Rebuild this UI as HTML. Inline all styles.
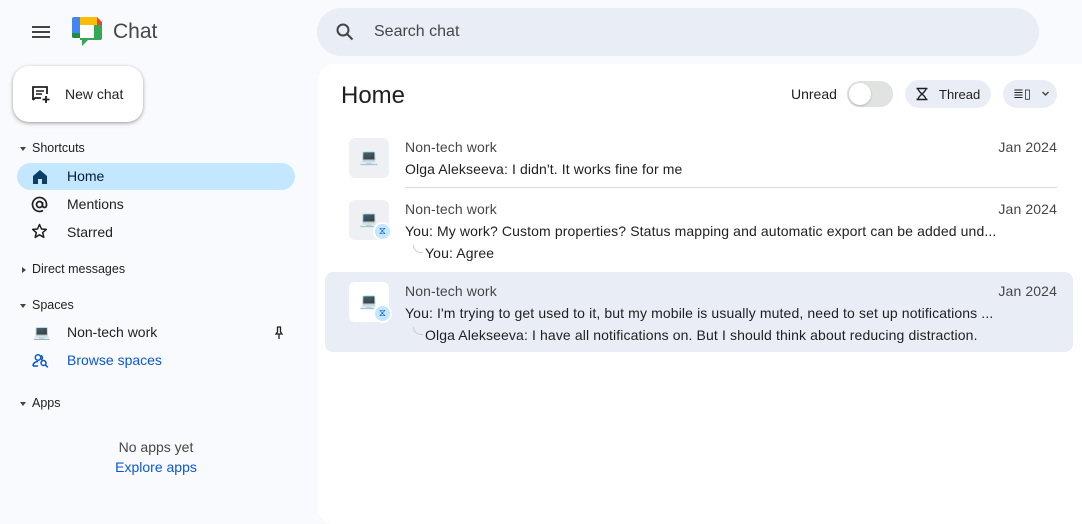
<!DOCTYPE html>
<html><head><meta charset="utf-8"><style>
*{box-sizing:border-box;margin:0;padding:0}
body{width:1082px;height:510px;overflow:hidden;background:#f8fafd;font-family:"Liberation Sans",Arial,sans-serif;color:#1f1f1f;position:relative}
.abs{position:absolute}
.side-item{position:absolute;left:17px;width:278px;height:27px;border-radius:14px;font-size:14px;line-height:27px}
.side-item span{position:absolute;left:50px}
.sec{position:absolute;left:20px;font-size:12.5px;color:#1f1f1f}
.sec:before{content:"";display:inline-block;margin-right:6px;vertical-align:middle;border-left:3.5px solid transparent;border-right:3.5px solid transparent;border-top:4px solid #444}
.sec.r:before{border-top:3.5px solid transparent;border-bottom:3.5px solid transparent;border-left:4px solid #444;border-right:0;margin-left:2px}
.row{position:absolute;left:325px;width:748px;font-size:14px;color:#444746;letter-spacing:0.12px}
.av{position:absolute;left:24px;width:40px;height:40px;border-radius:6px;background:#eef0f3;font-size:15px;text-align:center;line-height:40px}
.badge{position:absolute;left:48px;width:19px;height:19px;border-radius:50%;background:#c2e7ff;border:2px solid #fff;font-size:10px;text-align:center;line-height:15px;color:#0b57d0}
.nm{position:absolute;left:80px}
.dt{position:absolute;right:16px}
</style></head><body>
<div class="abs" style="left:32px;top:26px;width:18px;height:2px;background:#444;box-shadow:0 5px 0 #444,0 10px 0 #444"></div>
<svg class="abs" style="left:71px;top:16px" width="32" height="32" viewBox="0 0 32 32">
<path d="M3 1h6v21H3a2 2 0 0 1-2-2V3a2 2 0 0 1 2-2z" fill="#4285f4"/>
<path d="M1 17h8v5H3a2 2 0 0 1-2-2z" fill="#1e8e3e"/>
<path d="M9 1h17v8H9z" fill="#fbbc04"/>
<path d="M26 1l5 5v3h-5z" fill="#ea4335"/>
<path d="M23 9h8v13a2 2 0 0 1-2 2H17l-6 6v-6H9v-2h14z" fill="#34a853"/>
<path d="M9 9h14v13H9z" fill="#fff"/>
</svg>
<div class="abs" style="left:113px;top:20px;font-size:21px;color:#444746">Chat</div>
<div class="abs" style="left:317px;top:8px;width:722px;height:48px;border-radius:24px;background:#e9eef6"></div>
<svg class="abs" style="left:335px;top:22px" width="20" height="20" viewBox="0 0 20 20"><circle cx="8" cy="8" r="5.5" fill="none" stroke="#444" stroke-width="2"/><path d="M12 12l5.5 5.5" stroke="#444" stroke-width="2"/></svg>
<div class="abs" style="left:374px;top:23px;font-size:16px;color:#444746">Search chat</div>
<div class="abs" style="left:13px;top:66px;width:130px;height:56px;border-radius:16px;background:#fff;box-shadow:0 1px 3px rgba(0,0,0,.3),0 2px 6px rgba(0,0,0,.1)"></div>
<svg class="abs" style="left:31px;top:84px" width="20" height="20" viewBox="0 0 20 20"><path d="M2 16V3h14v7" fill="none" stroke="#1f1f1f" stroke-width="1.8"/><path d="M2 16l2-2h6" fill="none" stroke="#1f1f1f" stroke-width="1.8"/><path d="M5 7h8M5 10h6" stroke="#1f1f1f" stroke-width="1.6"/><path d="M15 12v7M11.5 15.5h7" stroke="#1f1f1f" stroke-width="1.8"/></svg>
<div class="abs" style="left:65px;top:86px;font-size:14px;font-weight:500">New chat</div>
<div class="sec" style="top:141px">Shortcuts</div>
<div class="side-item" style="top:163px;background:#c2e7ff;color:#001d35"><svg class="abs" style="left:15px;top:6px" width="16" height="16" viewBox="0 0 16 16"><path d="M1 7L8 1l7 6v8h-5v-5H6v5H1z" fill="#0b3f66"/></svg><span>Home</span></div>
<div class="side-item" style="top:191px"><svg class="abs" style="left:14px;top:5px" width="17" height="17" viewBox="0 0 17 17"><circle cx="8.5" cy="8.5" r="3" fill="none" stroke="#1f1f1f" stroke-width="1.7"/><path d="M11.5 6v3.5a2 2 0 0 0 4 0V8.5A7 7 0 1 0 12 14.5" fill="none" stroke="#1f1f1f" stroke-width="1.7"/></svg><span>Mentions</span></div>
<div class="side-item" style="top:219px"><svg class="abs" style="left:14px;top:4px" width="17" height="17" viewBox="0 0 17 17"><path d="M8.5 1.5l2 4.5 4.8.4-3.6 3.2 1.1 4.8-4.3-2.6-4.3 2.6 1.1-4.8L1.7 6.4l4.8-.4z" fill="none" stroke="#1f1f1f" stroke-width="1.5" stroke-linejoin="round"/></svg><span>Starred</span></div>
<div class="sec r" style="top:262px">Direct messages</div>
<div class="sec" style="top:298px">Spaces</div>
<div class="side-item" style="top:319px"><span style="left:16px;font-size:14px">💻</span><span>Non-tech work</span><svg class="abs" style="left:257px;top:7px" width="10" height="13" viewBox="0 0 10 13"><path d="M3 1h4M3.5 1v5L2 8h6L6.5 6V1M5 8v5" fill="none" stroke="#1f1f1f" stroke-width="1.3"/></svg></div>
<div class="side-item" style="top:347px;color:#0b57d0"><svg class="abs" style="left:15px;top:6px" width="17" height="16" viewBox="0 0 17 16"><circle cx="6" cy="4.5" r="2.7" fill="none" stroke="#0b57d0" stroke-width="1.5"/><path d="M1 13c0-3 2.5-4.5 5-4.5" fill="none" stroke="#0b57d0" stroke-width="1.5"/><path d="M1 13h5" stroke="#0b57d0" stroke-width="1.5"/><circle cx="11.5" cy="10" r="2.5" fill="none" stroke="#0b57d0" stroke-width="1.5"/><path d="M13.3 11.8l2.5 2.5" stroke="#0b57d0" stroke-width="1.5"/><path d="M9 2.5a2.5 2.5 0 0 1 0 4.5" fill="none" stroke="#0b57d0" stroke-width="1.5"/></svg><span style="color:#0b57d0">Browse spaces</span></div>
<div class="sec" style="top:396px">Apps</div>
<div class="abs" style="left:0;width:312px;top:439px;text-align:center;font-size:14px;color:#444746">No apps yet</div>
<div class="abs" style="left:0;width:312px;top:459px;text-align:center;font-size:14px;color:#0b57d0">Explore apps</div>
<div class="abs" style="left:318px;top:64px;width:780px;height:460px;border-radius:16px;background:#fff"></div>
<div class="abs" style="left:341px;top:82px;font-size:24px;color:#1f1f1f">Home</div>
<div class="abs" style="left:791px;top:86px;font-size:14px">Unread</div>
<div class="abs" style="left:847px;top:81px;width:46px;height:26px;border-radius:13px;background:#e1e3e1;border:1.5px solid #dde1e6"></div>
<div class="abs" style="left:849px;top:83px;width:22px;height:22px;border-radius:50%;background:#fff;box-shadow:0 1px 2px rgba(0,0,0,.2)"></div>
<div class="abs" style="left:905px;top:80px;width:86px;height:28px;border-radius:14px;background:#e9eef6"></div>
<svg class="abs" style="left:915px;top:87px" width="14" height="14" viewBox="0 0 14 14"><path d="M1.5 1.5h11M1.5 12.5h11M3 1.5c0 4 8 7 8 11M11 1.5c0 4-8 7-8 11" fill="none" stroke="#1f1f1f" stroke-width="1.4"/></svg>
<div class="abs" style="left:939px;top:87px;font-size:13px">Thread</div>
<div class="abs" style="left:1003px;top:80px;width:54px;height:28px;border-radius:14px;background:#e9eef6"></div>
<div class="abs" style="left:1013px;top:86px;font-size:13px">≣▯</div>
<svg class="abs" style="left:1041px;top:90px" width="9" height="7" viewBox="0 0 9 7"><path d="M1.5 2l3 3 3-3" fill="none" stroke="#444" stroke-width="1.4"/></svg>
<div class="row" style="top:130px;height:58px"><div class="av" style="top:8px">💻</div><div class="nm" style="top:9px">Non-tech work</div><div class="dt" style="top:9px">Jan 2024</div><div class="nm" style="top:31px;color:#1f1f1f">Olga Alekseeva: I didn't. It works fine for me</div></div>
<div class="abs" style="left:405px;top:187px;width:652px;height:1px;background:#dadce0"></div>
<div class="row" style="top:192px;height:76px"><div class="av" style="top:8px">💻</div><div class="badge" style="top:30px">⧖</div><div class="nm" style="top:9px">Non-tech work</div><div class="dt" style="top:9px">Jan 2024</div><div class="nm" style="top:31px;color:#1f1f1f">You: My work? Custom properties? Status mapping and automatic export can be added und...</div><div class="nm" style="top:53px;left:88px;width:10px;height:8px;border-left:1px solid #ccc;border-bottom:1px solid #ccc;border-bottom-left-radius:8px"></div><div class="nm" style="top:53px;left:100px;color:#1f1f1f">You: Agree</div></div>
<div class="row" style="top:272px;height:80px;background:#e9eef6;border-radius:8px"><div class="av" style="top:10px;background:#fff">💻</div><div class="badge" style="top:32px">⧖</div><div class="nm" style="top:11px">Non-tech work</div><div class="dt" style="top:11px">Jan 2024</div><div class="nm" style="top:33px;color:#1f1f1f">You: I'm trying to get used to it, but my mobile is usually muted, need to set up notifications ...</div><div class="nm" style="top:55px;left:88px;width:10px;height:8px;border-left:1px solid #ccc;border-bottom:1px solid #ccc;border-bottom-left-radius:8px"></div><div class="nm" style="top:55px;left:100px;color:#1f1f1f">Olga Alekseeva: I have all notifications on. But I should think about reducing distraction.</div></div>
</body></html>
